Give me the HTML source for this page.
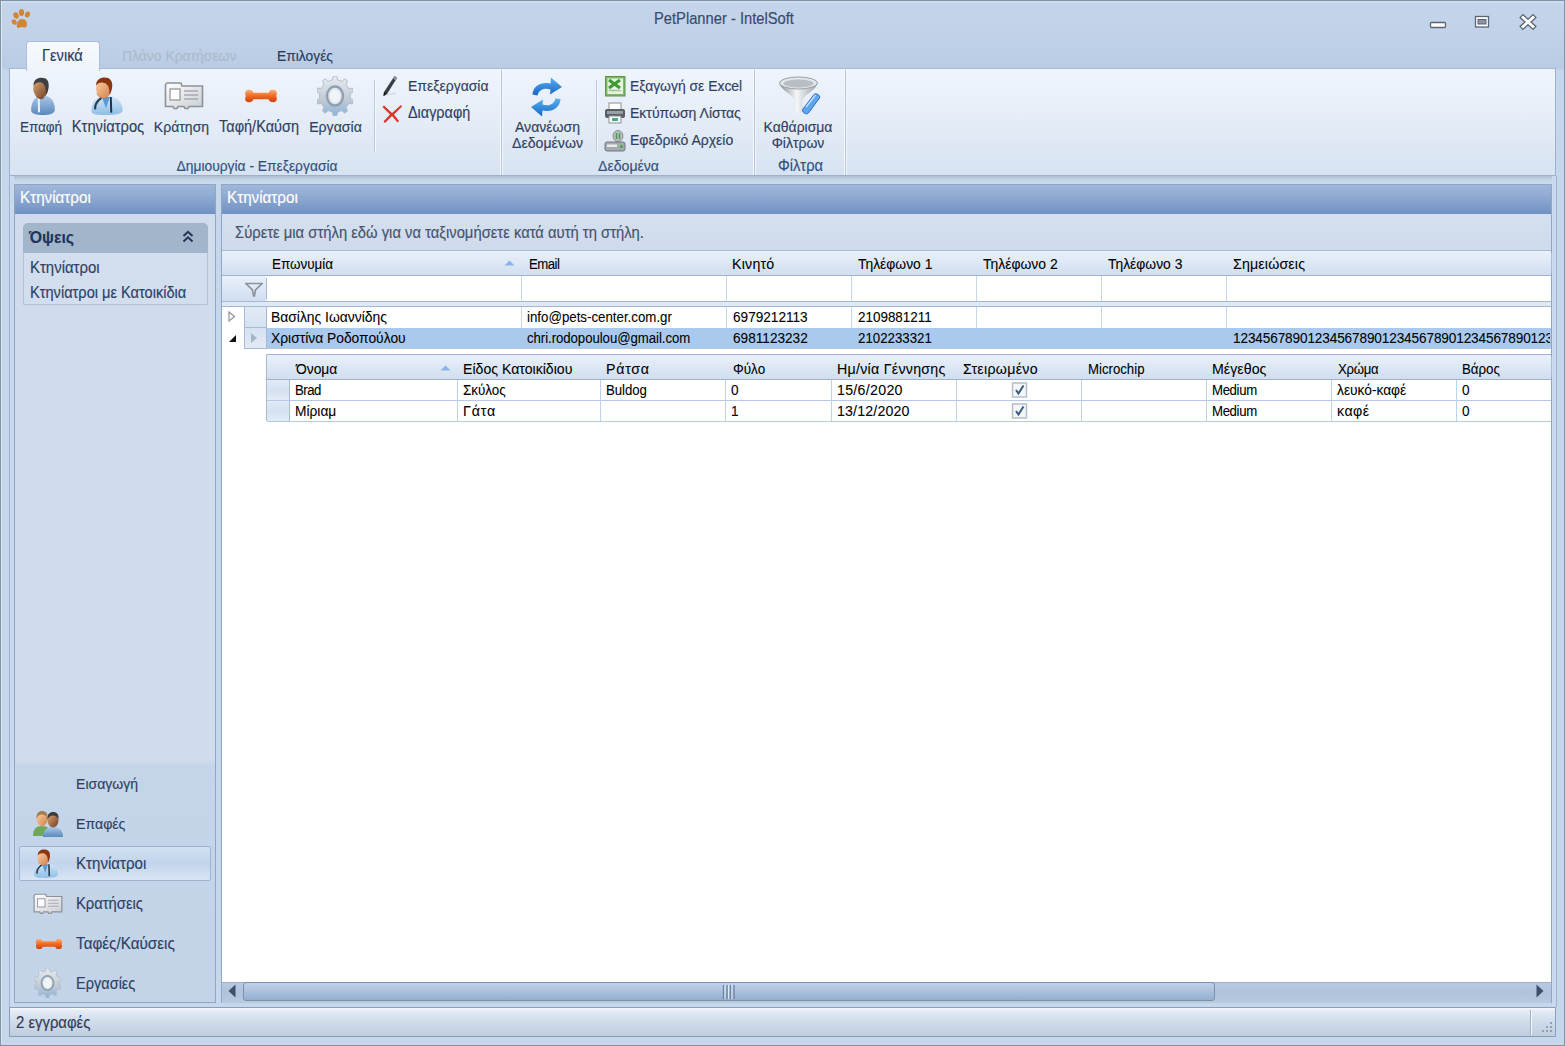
<!DOCTYPE html>
<html><head><meta charset="utf-8">
<style>
*{box-sizing:border-box;margin:0;padding:0}
html,body{width:1565px;height:1046px;overflow:hidden;background:#c4d5eb}
body{position:relative;font-family:"Liberation Sans",sans-serif;font-size:14px;color:#000}
.a{position:absolute}
.t{position:absolute;white-space:nowrap;line-height:16px;-webkit-text-stroke:0.15px currentColor;transform:scaleY(1.08)}
.k{-webkit-text-stroke:0.08px currentColor}
.rl{position:absolute;color:#2e4164;font-size:14px;line-height:16px;white-space:nowrap;-webkit-text-stroke:0.15px currentColor;transform:scaleY(1.08)}
</style></head><body>
<div id="root" style="position:absolute;left:0;top:0;width:1565px;height:1046px">
<svg width="0" height="0" style="position:absolute">
<defs>
<linearGradient id="gSkinD" x1="0" y1="0" x2="1" y2="1"><stop offset="0" stop-color="#e0a878"/><stop offset="1" stop-color="#6e4026"/></linearGradient>
<linearGradient id="gSkinL" x1="0" y1="0" x2="1" y2="1"><stop offset="0" stop-color="#ffd2a6"/><stop offset="1" stop-color="#d0804a"/></linearGradient>
<linearGradient id="gShirt" x1="0" y1="0" x2="0" y2="1"><stop offset="0" stop-color="#a9c8e8"/><stop offset="1" stop-color="#5d88bb"/></linearGradient>
<linearGradient id="gCoat" x1="0" y1="0" x2="0" y2="1"><stop offset="0" stop-color="#d2e8fa"/><stop offset="1" stop-color="#8fbde6"/></linearGradient>
<linearGradient id="gBone" x1="0" y1="0" x2="0" y2="1"><stop offset="0" stop-color="#ffb070"/><stop offset="0.5" stop-color="#f06a20"/><stop offset="1" stop-color="#d04010"/></linearGradient>
<linearGradient id="gGear" x1="0" y1="0" x2="0" y2="1"><stop offset="0" stop-color="#e8ecf0"/><stop offset="0.6" stop-color="#c0cad4"/><stop offset="1" stop-color="#8cb4dc"/></linearGradient>
<linearGradient id="gCard" x1="0" y1="0" x2="1" y2="1"><stop offset="0" stop-color="#ffffff"/><stop offset="1" stop-color="#c9cdd2"/></linearGradient>
<linearGradient id="gFunnel" x1="0" y1="0" x2="1" y2="0"><stop offset="0" stop-color="#8a8e94"/><stop offset="0.45" stop-color="#f4f6f8"/><stop offset="1" stop-color="#9ca2a8"/></linearGradient>
<linearGradient id="gBlue" x1="0" y1="0" x2="0" y2="1"><stop offset="0" stop-color="#58b0f4"/><stop offset="1" stop-color="#1666c4"/></linearGradient>
</defs></svg>
<div class="a" style="left:0px;top:0px;width:1565px;height:1046px;border:1px solid #8293a3;background:linear-gradient(#c4d5eb,#c1d2e9 30px,#bbcde5 62px,#b9cce6 67px,#c6d6eb 70px,#c6d6eb)"></div>
<div class="a" style="left:1px;top:1px;width:1563px;height:2px;background:#cddcf0"></div>
<div class="a" style="left:1px;top:1px;width:1px;height:1043px;background:#dae6f4"></div>
<span class="t" style="left:654px;top:11px;font-size:14.72px;color:#3a4a6a;">PetPlanner - IntelSoft</span>
<svg class="a" style="left:11px;top:8px" width="22" height="22" viewBox="0 0 22 22">
<g fill="#d38434"><ellipse cx="5" cy="7.5" rx="2.6" ry="3.2" transform="rotate(-25 5 7.5)"/><ellipse cx="10.5" cy="4.5" rx="2.6" ry="3.4"/><ellipse cx="16.5" cy="6.5" rx="2.5" ry="3.1" transform="rotate(25 16.5 6.5)"/><ellipse cx="3.2" cy="14" rx="2.3" ry="2.8" transform="rotate(-30 3.2 14)"/><path d="M6 19 C5 14 8 11 11 11 C14.5 11 17 14 15.5 18.5 C14.5 20.5 12 19 10.5 19 C9 19 6.5 21 6 19 Z"/></g>
</svg>
<svg class="a" style="left:1425px;top:12px" width="120" height="22" viewBox="0 0 120 22">
<rect x="5.5" y="10.5" width="15" height="5" rx="1" fill="#fff" stroke="#5b6577" stroke-width="1.3"/>
<rect x="50.5" y="4.5" width="13" height="10.5" fill="#fff" stroke="#5b6577" stroke-width="1.3"/>
<rect x="53" y="7.5" width="8" height="4.5" fill="#8b93a2" stroke="#5b6577" stroke-width="1"/>
<path d="M98 5.5 L108 14.5 M108 5.5 L98 14.5" stroke="#5b6577" stroke-width="5.4" stroke-linecap="square"/>
<path d="M98 5.5 L108 14.5 M108 5.5 L98 14.5" stroke="#fff" stroke-width="2.8" stroke-linecap="square"/>
</svg>
<div class="a" style="left:9px;top:68px;width:1547px;height:108px;border:1px solid #9fb1c8;border-top-color:#a9bacd;background:linear-gradient(#eff5fd,#e4ecf7 50%,#d7e3f2)"></div>
<div class="a" style="left:9px;top:176px;width:1547px;height:8px;background:linear-gradient(#aebfd3,#c6d6ea 50%,#cbdaee)"></div>
<svg class="a" style="left:29px;top:77px" width="28" height="38" viewBox="0 0 28 40">
<path d="M1.5 35 C1.5 25 6.5 19.5 14 19.5 C21.5 19.5 26.5 25 26.5 34.5 C26.5 39 20 40 14 40 C7.5 40 1.5 39 1.5 35 Z" fill="url(#gShirt)"/>
<path d="M8.5 21 L10.5 21 L10.8 37 L8.8 37 Z" fill="#f0f4f8"/>
<path d="M6 18 C7 23 12 25 15 22 L15 17 Z" fill="#7a5030"/>
<ellipse cx="11.5" cy="12" rx="7.8" ry="10.2" fill="url(#gSkinD)"/>
<path d="M4 9 C4 3 8 0.8 12.5 0.8 C18 0.8 20.5 4 20 10.5 C19.5 14 18.5 17 17 19 C17.5 13 16.5 8 13 6 C9.5 4.8 6 6 4 9 Z" fill="#3e3e40"/>
</svg>
<svg class="a" style="left:89px;top:77px" width="36" height="38" viewBox="0 0 36 40">
<path d="M1.5 36 C1.5 25 8 19.5 17 19.5 C26 19.5 34.5 25 34.5 35 C34.5 39 26 40 18 40 C9 40 1.5 39.5 1.5 36 Z" fill="url(#gCoat)"/>
<path d="M12.5 21 L17 33 L21 21 Z" fill="#5a9ad8"/>
<path d="M12 22 C8 25 5 29 5.5 34" stroke="#2a3a4a" stroke-width="2.2" fill="none"/>
<path d="M22 21 L22.5 37.5" stroke="#1e2e40" stroke-width="2" fill="none"/>
<path d="M7 17 C9 22 14 24 19 21 L19 16 Z" fill="#c07040"/>
<ellipse cx="14.5" cy="12" rx="8" ry="10.2" fill="url(#gSkinL)"/>
<path d="M6.5 9 C6.5 3 10.5 0.5 15.5 0.5 C21 0.5 24 4 23.5 10 C23 14 22 17 20.5 19 C21 13 20 8 16 6.5 C12 5.2 8.5 6 6.5 9 Z" fill="#8a3410"/>
</svg>
<svg class="a" style="left:164px;top:81px" width="40" height="30" viewBox="0 0 40 30">
<path d="M1.5 3.5 L1.5 25.5 L9 25.5 L10 27.5 L13 27.5 L14 25.5 L20 25.5 L21 27.5 L24 27.5 L25 25.5 L38.5 25.5 L38.5 5 L18 5 L17 2 L3 2 Z" fill="url(#gCard)" stroke="#8e9296" stroke-width="1.6"/>
<rect x="6" y="8" width="10" height="11" fill="#fff" stroke="#9aa0a6" stroke-width="1.4"/>
<path d="M20 10 H34 M20 14 H34 M20 18 H34" stroke="#a4aab0" stroke-width="1.3"/>
</svg>
<svg class="a" style="left:244px;top:89px" width="34" height="14" viewBox="0 0 34 14">
<path d="M5 0.8 C8 0.8 9 2.5 9.5 3.8 L24.5 3.8 C25 2.5 26 0.8 29 0.8 C32.5 0.8 33.8 3.8 32.2 7 C33.8 10.2 32.5 13.2 29 13.2 C26 13.2 25 11.5 24.5 10.2 L9.5 10.2 C9 11.5 8 13.2 5 13.2 C1.5 13.2 0.2 10.2 1.8 7 C0.2 3.8 1.5 0.8 5 0.8 Z" fill="url(#gBone)"/>
</svg>
<svg class="a" style="left:317px;top:76px" width="36" height="40" viewBox="0 0 36 40">
<g transform="translate(18,20)">
<path d="M-2.62 -16.04 L-1.71 -19.87 L1.71 -19.87 L2.62 -16.04 L6.86 -14.60 L9.74 -17.13 L12.50 -15.02 L11.10 -11.36 L13.72 -7.58 L17.47 -7.85 L18.52 -4.43 L15.34 -2.34 L15.34 2.34 L18.52 4.43 L17.47 7.85 L13.72 7.58 L11.10 11.36 L12.50 15.02 L9.74 17.13 L6.86 14.60 L2.62 16.04 L1.71 19.87 L-1.71 19.87 L-2.62 16.04 L-6.86 14.60 L-9.74 17.13 L-12.50 15.02 L-11.10 11.36 L-13.72 7.58 L-17.47 7.85 L-18.52 4.43 L-15.34 2.34 L-15.34 -2.34 L-18.52 -4.43 L-17.47 -7.85 L-13.72 -7.58 L-11.10 -11.36 L-12.50 -15.02 L-9.74 -17.13 L-6.86 -14.60 Z" fill="url(#gGear)" stroke="#a8b4c0" stroke-width="0.8"/>
<ellipse cx="0" cy="0" rx="8" ry="9.5" fill="#dfe5eb" stroke="#8fa0b2" stroke-width="2.4"/>
<ellipse cx="0" cy="0" rx="5" ry="6.5" fill="#f2f5f8"/>
</g></svg>
<span class="rl" style="left:-109px;width:300px;text-align:center;top:120px;font-size:13.51px;color:#2e4164;">Επαφή</span>
<span class="rl" style="left:-42px;width:300px;text-align:center;top:119px;font-size:14.73px;color:#2e4164;">Κτηνίατρος</span>
<span class="rl" style="left:31.5px;width:300px;text-align:center;top:119px;font-size:14.04px;color:#2e4164;">Κράτηση</span>
<span class="rl" style="left:109px;width:300px;text-align:center;top:119px;font-size:14.53px;color:#2e4164;">Ταφή/Καύση</span>
<span class="rl" style="left:185.5px;width:300px;text-align:center;top:119px;font-size:14.13px;color:#2e4164;">Εργασία</span>
<span class="rl" style="left:107px;width:300px;text-align:center;top:157.5px;font-size:13.84px;color:#35507e;">Δημιουργία - Επεξεργασία</span>
<div class="a" style="left:374px;top:80px;width:1px;height:72px;background:#b9c9dd;box-shadow:1px 0 0 #f6f9fd"></div>
<div class="a" style="left:596px;top:80px;width:1px;height:72px;background:#b9c9dd;box-shadow:1px 0 0 #f6f9fd"></div>
<div class="a" style="left:500px;top:70px;width:1px;height:105px;background:#f6f9fd"></div>
<div class="a" style="left:501px;top:70px;width:1px;height:105px;background:#b3c3d8"></div>
<div class="a" style="left:502px;top:70px;width:1px;height:105px;background:#f3f7fc"></div>
<div class="a" style="left:753px;top:70px;width:1px;height:105px;background:#f6f9fd"></div>
<div class="a" style="left:754px;top:70px;width:1px;height:105px;background:#b3c3d8"></div>
<div class="a" style="left:755px;top:70px;width:1px;height:105px;background:#f3f7fc"></div>
<div class="a" style="left:844px;top:70px;width:1px;height:105px;background:#f6f9fd"></div>
<div class="a" style="left:845px;top:70px;width:1px;height:105px;background:#b3c3d8"></div>
<div class="a" style="left:846px;top:70px;width:1px;height:105px;background:#f3f7fc"></div>
<svg class="a" style="left:382px;top:75px" width="16" height="22" viewBox="0 0 16 22">
<path d="M12.5 1 L15 3 L5 19 L1.5 21 L2 17 Z" fill="#3a3e44"/><path d="M12.5 1 L15 3 L13.5 5.5 L11 3.5 Z" fill="#8a9098"/><path d="M2 17 L5 19 L1.5 21 Z" fill="#111"/><path d="M4 20 L14 18" stroke="#c8ccd2" stroke-width="1.5" opacity="0.6"/>
</svg>
<svg class="a" style="left:382px;top:104px" width="21" height="20" viewBox="0 0 21 20">
<path d="M2 1.5 L10 9 L19 1 L20 2.5 L12 10.5 L17 17 L15.5 18.5 L10 12 L3 19 L1.5 17.5 L8 10.5 L0.5 3 Z" fill="#d8352a"/>
</svg>
<svg class="a" style="left:530px;top:77px" width="33" height="40" viewBox="0 0 33 40">
<path d="M2.5 17.5 C3 9 11 4.5 20.5 6.5 L21 0.5 L32 10 L20 17.5 L20.5 12.5 C14 10.5 9 12.5 7.5 18.5 Z" fill="url(#gBlue)"/>
<path d="M30.5 22 C30 31 22 35.5 12.5 33.5 L12 39.5 L1 30 L13 22.5 L12.5 27.5 C19 29.5 24 27.5 25.5 21.5 Z" fill="url(#gBlue)"/>
</svg>
<svg class="a" style="left:605px;top:76px" width="21" height="21" viewBox="0 0 21 21">
<rect x="0.5" y="0.5" width="19.5" height="19.5" fill="#7fb86a" stroke="#5a9648"/><rect x="2.5" y="2.5" width="15.5" height="15.5" fill="#e6f2df"/>
<path d="M4 4 L15 12 M15 4 L4 12" stroke="#3d9a36" stroke-width="3.2"/>
<path d="M4 14.5 H16" stroke="#9cc890" stroke-width="1.5"/>
</svg>
<svg class="a" style="left:604px;top:102px" width="22" height="22" viewBox="0 0 22 22">
<rect x="5" y="1" width="12" height="7" fill="#fff" stroke="#8a9096"/>
<rect x="1" y="7" width="20" height="9" rx="2" fill="#5a5f66"/>
<rect x="3" y="9" width="16" height="3" fill="#9aa0a6"/>
<rect x="5" y="14" width="12" height="7" fill="#fff" stroke="#8a9096"/>
<rect x="8" y="16" width="6" height="3" fill="#44aa88"/>
</svg>
<svg class="a" style="left:604px;top:130px" width="22" height="22" viewBox="0 0 22 22">
<ellipse cx="14" cy="6" rx="5" ry="5.5" fill="#b8bec4" stroke="#888e94"/>
<path d="M12.5 3 V9 M15.5 3 V9" stroke="#4a9a4a" stroke-width="1.5"/>
<rect x="1" y="12" width="20" height="9" rx="2" fill="#a4aab0" stroke="#70767c"/>
<rect x="3" y="14.5" width="10" height="2.5" fill="#e8eaec"/>
<circle cx="17.5" cy="16.5" r="1.6" fill="#38b038"/>
</svg>
<svg class="a" style="left:778px;top:76px" width="44" height="40" viewBox="0 0 44 40">
<path d="M1.5 7 C1.5 13 15 19 16.5 24 L16.5 35 C18 38.5 23 38.5 24.5 35 L24.5 24 C26 19 39.5 13 39.5 7 Z" fill="url(#gFunnel)"/>
<ellipse cx="20.5" cy="7" rx="19" ry="6" fill="#e2e6ea" stroke="#9aa0a6"/>
<ellipse cx="20.5" cy="7.5" rx="15" ry="4" fill="#b8bec4"/>
<path d="M25 33 L36 18.5 C37.5 16.5 43 19.5 41.5 22 L30.5 37 C28.5 39.5 23 36 25 33 Z" fill="#5ea6f0" stroke="#2a6cc4"/>
<path d="M28 31 L37.5 19" stroke="#c4e0fb" stroke-width="1.5"/>
</svg>
<span class="rl" style="left:408px;top:78px;font-size:13.99px;color:#2e4164;">Επεξεργασία</span>
<span class="rl" style="left:408px;top:105px;font-size:14.42px;color:#2e4164;">Διαγραφή</span>
<span class="rl" style="left:397.5px;width:300px;text-align:center;top:119px;font-size:14.05px;color:#2e4164;">Ανανέωση</span>
<span class="rl" style="left:397.5px;width:300px;text-align:center;top:135px;font-size:14.1px;color:#2e4164;">Δεδομένων</span>
<span class="rl" style="left:630px;top:78px;font-size:13.92px;color:#2e4164;">Εξαγωγή σε Excel</span>
<span class="rl" style="left:630px;top:105px;font-size:14.03px;color:#2e4164;">Εκτύπωση Λίστας</span>
<span class="rl" style="left:630px;top:132px;font-size:14.04px;color:#2e4164;">Εφεδρικό Αρχείο</span>
<span class="rl" style="left:478.5px;width:300px;text-align:center;top:157.5px;font-size:14.07px;color:#35507e;">Δεδομένα</span>
<span class="rl" style="left:648px;width:300px;text-align:center;top:119px;font-size:13.98px;color:#2e4164;">Καθάρισμα</span>
<span class="rl" style="left:648px;width:300px;text-align:center;top:135px;font-size:14.0px;color:#2e4164;">Φίλτρων</span>
<span class="rl" style="left:650.5px;width:300px;text-align:center;top:157.5px;font-size:14.71px;color:#35507e;">Φίλτρα</span>
<div class="a" style="left:26px;top:41px;width:74px;height:30px;border:1px solid #a9bedb;border-bottom:none;border-radius:3px 3px 0 0;background:linear-gradient(#f7fafe,#eef4fb)"></div>
<span class="t" style="left:42px;top:48px;font-size:14.65px;color:#2a3b5a;">Γενικά</span>
<span class="t" style="left:122px;top:48px;font-size:13.92px;color:#adbacb;">Πλάνο Κρατήσεων</span>
<span class="t" style="left:277px;top:48px;font-size:13.84px;color:#2a3b5a;">Επιλογές</span>
<div class="a" style="left:14px;top:184px;width:202px;height:819px;border:1px solid #93a6c0;background:#d0dced"></div>
<div class="a" style="left:15px;top:185px;width:200px;height:29px;background:linear-gradient(#a0b7d9,#8aa6d0 50%,#7091c2)"></div>
<span class="t" style="left:20px;top:190px;font-size:15.2px;color:#fff;">Κτηνίατροι</span>
<div class="a" style="left:221px;top:184px;width:1331px;height:819px;border:1px solid #8fa6c6;background:#fff"></div>
<div class="a" style="left:222px;top:185px;width:1329px;height:29px;background:linear-gradient(#a0b7d9,#8aa6d0 50%,#7091c2)"></div>
<span class="t" style="left:227px;top:190px;font-size:15.2px;color:#fff;">Κτηνίατροι</span>
<div class="a" style="left:222px;top:214px;width:1329px;height:36px;background:linear-gradient(#d4e0ef,#cfdbec)"></div>
<div class="a" style="left:222px;top:250px;width:1329px;height:1px;background:#a7bad3"></div>
<span class="t" style="left:235px;top:224.5px;font-size:14.8px;color:#46536a;">Σύρετε μια στήλη εδώ για να ταξινομήσετε κατά αυτή τη στήλη.</span>
<div class="a" style="left:222px;top:251px;width:44px;height:24px;background:linear-gradient(#e9f0fa,#dce7f5 55%,#d1def0)"></div>
<div class="a" style="left:266px;top:253px;width:1px;height:20px;background:#aabcd4"></div>
<div class="a" style="left:267px;top:253px;width:1px;height:20px;background:#f2f6fc"></div>
<div class="a" style="left:266px;top:251px;width:255px;height:24px;background:linear-gradient(#e9f0fa,#dce7f5 55%,#d1def0)"></div>
<div class="a" style="left:521px;top:253px;width:1px;height:20px;background:#aabcd4"></div>
<div class="a" style="left:522px;top:253px;width:1px;height:20px;background:#f2f6fc"></div>
<span class="t k" style="left:272px;top:257px;font-size:13.45px;color:#000;">Επωνυμία</span>
<div class="a" style="left:521px;top:251px;width:205px;height:24px;background:linear-gradient(#e9f0fa,#dce7f5 55%,#d1def0)"></div>
<div class="a" style="left:726px;top:253px;width:1px;height:20px;background:#aabcd4"></div>
<div class="a" style="left:727px;top:253px;width:1px;height:20px;background:#f2f6fc"></div>
<span class="t k" style="left:529px;top:257px;font-size:13.2px;color:#000;letter-spacing:-0.532px;">Email</span>
<div class="a" style="left:726px;top:251px;width:125px;height:24px;background:linear-gradient(#e9f0fa,#dce7f5 55%,#d1def0)"></div>
<div class="a" style="left:851px;top:253px;width:1px;height:20px;background:#aabcd4"></div>
<div class="a" style="left:852px;top:253px;width:1px;height:20px;background:#f2f6fc"></div>
<span class="t k" style="left:732px;top:256px;font-size:14.2px;color:#000;letter-spacing:0.224px;">Κινητό</span>
<div class="a" style="left:851px;top:251px;width:125px;height:24px;background:linear-gradient(#e9f0fa,#dce7f5 55%,#d1def0)"></div>
<div class="a" style="left:976px;top:253px;width:1px;height:20px;background:#aabcd4"></div>
<div class="a" style="left:977px;top:253px;width:1px;height:20px;background:#f2f6fc"></div>
<span class="t k" style="left:858px;top:256px;font-size:13.89px;color:#000;">Τηλέφωνο 1</span>
<div class="a" style="left:976px;top:251px;width:125px;height:24px;background:linear-gradient(#e9f0fa,#dce7f5 55%,#d1def0)"></div>
<div class="a" style="left:1101px;top:253px;width:1px;height:20px;background:#aabcd4"></div>
<div class="a" style="left:1102px;top:253px;width:1px;height:20px;background:#f2f6fc"></div>
<span class="t k" style="left:983px;top:256px;font-size:13.94px;color:#000;">Τηλέφωνο 2</span>
<div class="a" style="left:1101px;top:251px;width:125px;height:24px;background:linear-gradient(#e9f0fa,#dce7f5 55%,#d1def0)"></div>
<div class="a" style="left:1226px;top:253px;width:1px;height:20px;background:#aabcd4"></div>
<div class="a" style="left:1227px;top:253px;width:1px;height:20px;background:#f2f6fc"></div>
<span class="t k" style="left:1108px;top:256px;font-size:13.88px;color:#000;">Τηλέφωνο 3</span>
<div class="a" style="left:1226px;top:251px;width:325px;height:24px;background:linear-gradient(#e9f0fa,#dce7f5 55%,#d1def0)"></div>
<div class="a" style="left:1551px;top:253px;width:1px;height:20px;background:#aabcd4"></div>
<div class="a" style="left:1552px;top:253px;width:1px;height:20px;background:#f2f6fc"></div>
<span class="t k" style="left:1233px;top:256px;font-size:14.2px;color:#000;letter-spacing:0.167px;">Σημειώσεις</span>
<div class="a" style="left:222px;top:275px;width:1329px;height:1px;background:#9fb3cd"></div>
<svg class="a" style="left:504px;top:260px" width="11" height="6" viewBox="0 0 11 6"><path d="M0.5 5.5 L5.5 0.5 L10.5 5.5 Z" fill="#8ab4e8"/></svg>
<div class="a" style="left:222px;top:276px;width:44px;height:25px;background:linear-gradient(#e9f0fa,#dce7f5 55%,#d1def0)"></div>
<div class="a" style="left:266px;top:278px;width:1px;height:21px;background:#aabcd4"></div>
<div class="a" style="left:267px;top:278px;width:1px;height:21px;background:#f2f6fc"></div>
<div class="a" style="left:267px;top:276px;width:1284px;height:25px;background:#fff"></div>
<div class="a" style="left:521px;top:276px;width:1px;height:25px;background:#c9d7ea"></div>
<div class="a" style="left:726px;top:276px;width:1px;height:25px;background:#c9d7ea"></div>
<div class="a" style="left:851px;top:276px;width:1px;height:25px;background:#c9d7ea"></div>
<div class="a" style="left:976px;top:276px;width:1px;height:25px;background:#c9d7ea"></div>
<div class="a" style="left:1101px;top:276px;width:1px;height:25px;background:#c9d7ea"></div>
<div class="a" style="left:1226px;top:276px;width:1px;height:25px;background:#c9d7ea"></div>
<svg class="a" style="left:245px;top:282px" width="18" height="15" viewBox="0 0 18 15"><path d="M1 1.5 H17 L10.5 8 L9.5 14 L8.5 14 L7.5 8 Z" fill="none" stroke="#8a939c" stroke-width="1.6"/></svg>
<div class="a" style="left:222px;top:301px;width:1329px;height:1px;background:#a4b7d0"></div>
<div class="a" style="left:222px;top:302px;width:1329px;height:4px;background:#dfe8f5"></div>
<div class="a" style="left:222px;top:306px;width:1329px;height:1px;background:#a4b7d0"></div>
<div class="a" style="left:222px;top:307px;width:1329px;height:42px;background:#fff"></div>
<div class="a" style="left:267px;top:328px;width:1284px;height:21px;background:#a9caee"></div>
<div class="a" style="left:244px;top:307px;width:22px;height:42px;background:linear-gradient(#e2eaf6,#d5e1f1 50%,#e3ebf7)"></div>
<div class="a" style="left:244px;top:307px;width:1px;height:42px;background:#a7bad3"></div>
<div class="a" style="left:266px;top:307px;width:1px;height:42px;background:#a7bad3"></div>
<div class="a" style="left:244px;top:327px;width:22px;height:1px;background:#a7bad3"></div>
<div class="a" style="left:244px;top:348px;width:22px;height:1px;background:#a7bad3"></div>
<div class="a" style="left:267px;top:348px;width:1284px;height:1px;background:#b9c9dc"></div>
<div class="a" style="left:521px;top:307px;width:1px;height:21px;background:#c9d7ea"></div>
<div class="a" style="left:726px;top:307px;width:1px;height:21px;background:#c9d7ea"></div>
<div class="a" style="left:851px;top:307px;width:1px;height:21px;background:#c9d7ea"></div>
<div class="a" style="left:976px;top:307px;width:1px;height:21px;background:#c9d7ea"></div>
<div class="a" style="left:1101px;top:307px;width:1px;height:21px;background:#c9d7ea"></div>
<div class="a" style="left:1226px;top:307px;width:1px;height:21px;background:#c9d7ea"></div>
<svg class="a" style="left:228px;top:311px" width="8" height="11" viewBox="0 0 8 11"><path d="M1 1 L6.5 5.5 L1 10 Z" fill="#fff" stroke="#8e949a" stroke-width="1.2"/></svg>
<svg class="a" style="left:228px;top:334px" width="9" height="9" viewBox="0 0 9 9"><path d="M8 1 L8 8 L1 8 Z" fill="#111"/></svg>
<svg class="a" style="left:250px;top:332px" width="8" height="12" viewBox="0 0 8 12"><path d="M1 1 L7 6 L1 11 Z" fill="#a6b6c8"/></svg>
<span class="t k" style="left:271px;top:309px;font-size:13.89px;color:#000;">Βασίλης Ιωαννίδης</span>
<span class="t k" style="left:527px;top:310px;font-size:13.29px;color:#000;">info@pets-center.com.gr</span>
<span class="t k" style="left:733px;top:310px;font-size:13.61px;color:#000;">6979212113</span>
<span class="t k" style="left:858px;top:310px;font-size:13.45px;color:#000;">2109881211</span>
<span class="t k" style="left:271px;top:330px;font-size:13.84px;color:#000;">Χριστίνα Ροδοπούλου</span>
<span class="t k" style="left:527px;top:331px;font-size:13.2px;color:#000;letter-spacing:-0.049px;">chri.rodopoulou@gmail.com</span>
<span class="t k" style="left:733px;top:331px;font-size:13.63px;color:#000;">6981123232</span>
<span class="t k" style="left:858px;top:331px;font-size:13.27px;color:#000;">2102233321</span>
<div class="a" style="left:1233px;top:331px;width:317px;height:17px;overflow:hidden"><span class="t k" style="left:0;top:0;font-size:13.6px;color:#000;letter-spacing:-0.12px">12345678901234567890123456789012345678901234567890</span></div>
<div class="a" style="left:266px;top:354px;width:1285px;height:1px;background:#9fb3cd"></div>
<div class="a" style="left:266px;top:355px;width:23px;height:24px;background:linear-gradient(#e9f0fa,#dce7f5 55%,#d1def0)"></div>
<div class="a" style="left:289px;top:357px;width:1px;height:20px;background:#aabcd4"></div>
<div class="a" style="left:290px;top:357px;width:1px;height:20px;background:#f2f6fc"></div>
<div class="a" style="left:289px;top:355px;width:168px;height:24px;background:linear-gradient(#e9f0fa,#dce7f5 55%,#d1def0)"></div>
<div class="a" style="left:457px;top:357px;width:1px;height:20px;background:#aabcd4"></div>
<div class="a" style="left:458px;top:357px;width:1px;height:20px;background:#f2f6fc"></div>
<span class="t k" style="left:296px;top:361px;font-size:13.85px;color:#000;">Όνομα</span>
<div class="a" style="left:457px;top:355px;width:143px;height:24px;background:linear-gradient(#e9f0fa,#dce7f5 55%,#d1def0)"></div>
<div class="a" style="left:600px;top:357px;width:1px;height:20px;background:#aabcd4"></div>
<div class="a" style="left:601px;top:357px;width:1px;height:20px;background:#f2f6fc"></div>
<span class="t k" style="left:463px;top:361px;font-size:14.1px;color:#000;">Είδος Κατοικίδιου</span>
<div class="a" style="left:600px;top:355px;width:125px;height:24px;background:linear-gradient(#e9f0fa,#dce7f5 55%,#d1def0)"></div>
<div class="a" style="left:725px;top:357px;width:1px;height:20px;background:#aabcd4"></div>
<div class="a" style="left:726px;top:357px;width:1px;height:20px;background:#f2f6fc"></div>
<span class="t k" style="left:606px;top:361px;font-size:14.2px;color:#000;letter-spacing:0.743px;">Ράτσα</span>
<div class="a" style="left:725px;top:355px;width:106px;height:24px;background:linear-gradient(#e9f0fa,#dce7f5 55%,#d1def0)"></div>
<div class="a" style="left:831px;top:357px;width:1px;height:20px;background:#aabcd4"></div>
<div class="a" style="left:832px;top:357px;width:1px;height:20px;background:#f2f6fc"></div>
<span class="t k" style="left:733px;top:362px;font-size:13.48px;color:#000;">Φύλο</span>
<div class="a" style="left:831px;top:355px;width:125px;height:24px;background:linear-gradient(#e9f0fa,#dce7f5 55%,#d1def0)"></div>
<div class="a" style="left:956px;top:357px;width:1px;height:20px;background:#aabcd4"></div>
<div class="a" style="left:957px;top:357px;width:1px;height:20px;background:#f2f6fc"></div>
<span class="t k" style="left:837px;top:361px;font-size:14.2px;color:#000;letter-spacing:0.279px;">Ημ/νία Γέννησης</span>
<div class="a" style="left:956px;top:355px;width:125px;height:24px;background:linear-gradient(#e9f0fa,#dce7f5 55%,#d1def0)"></div>
<div class="a" style="left:1081px;top:357px;width:1px;height:20px;background:#aabcd4"></div>
<div class="a" style="left:1082px;top:357px;width:1px;height:20px;background:#f2f6fc"></div>
<span class="t k" style="left:963px;top:361px;font-size:14.2px;color:#000;letter-spacing:0.306px;">Στειρωμένο</span>
<div class="a" style="left:1081px;top:355px;width:125px;height:24px;background:linear-gradient(#e9f0fa,#dce7f5 55%,#d1def0)"></div>
<div class="a" style="left:1206px;top:357px;width:1px;height:20px;background:#aabcd4"></div>
<div class="a" style="left:1207px;top:357px;width:1px;height:20px;background:#f2f6fc"></div>
<span class="t k" style="left:1088px;top:362px;font-size:13.21px;color:#000;">Microchip</span>
<div class="a" style="left:1206px;top:355px;width:125px;height:24px;background:linear-gradient(#e9f0fa,#dce7f5 55%,#d1def0)"></div>
<div class="a" style="left:1331px;top:357px;width:1px;height:20px;background:#aabcd4"></div>
<div class="a" style="left:1332px;top:357px;width:1px;height:20px;background:#f2f6fc"></div>
<span class="t k" style="left:1212px;top:361px;font-size:14.2px;color:#000;letter-spacing:0.037px;">Μέγεθος</span>
<div class="a" style="left:1331px;top:355px;width:125px;height:24px;background:linear-gradient(#e9f0fa,#dce7f5 55%,#d1def0)"></div>
<div class="a" style="left:1456px;top:357px;width:1px;height:20px;background:#aabcd4"></div>
<div class="a" style="left:1457px;top:357px;width:1px;height:20px;background:#f2f6fc"></div>
<span class="t k" style="left:1338px;top:362px;font-size:13.2px;color:#000;letter-spacing:-0.305px;">Χρώμα</span>
<div class="a" style="left:1456px;top:355px;width:95px;height:24px;background:linear-gradient(#e9f0fa,#dce7f5 55%,#d1def0)"></div>
<div class="a" style="left:1551px;top:357px;width:1px;height:20px;background:#aabcd4"></div>
<div class="a" style="left:1552px;top:357px;width:1px;height:20px;background:#f2f6fc"></div>
<span class="t k" style="left:1462px;top:362px;font-size:13.31px;color:#000;">Βάρος</span>
<div class="a" style="left:266px;top:354px;width:1px;height:67px;background:#a7bad3"></div>
<div class="a" style="left:266px;top:379px;width:1285px;height:1px;background:#9fb3cd"></div>
<svg class="a" style="left:440px;top:365px" width="11" height="6" viewBox="0 0 11 6"><path d="M0.5 5.5 L5.5 0.5 L10.5 5.5 Z" fill="#8ab4e8"/></svg>
<div class="a" style="left:267px;top:380px;width:23px;height:20px;background:linear-gradient(#e2eaf6,#d5e1f1 50%,#e3ebf7)"></div>
<div class="a" style="left:289px;top:380px;width:1px;height:20px;background:#a7bad3"></div>
<div class="a" style="left:267px;top:400px;width:1284px;height:1px;background:#b5c8e6"></div>
<div class="a" style="left:267px;top:401px;width:23px;height:20px;background:linear-gradient(#e2eaf6,#d5e1f1 50%,#e3ebf7)"></div>
<div class="a" style="left:289px;top:401px;width:1px;height:20px;background:#a7bad3"></div>
<div class="a" style="left:267px;top:421px;width:1284px;height:1px;background:#b5c8e6"></div>
<div class="a" style="left:457px;top:380px;width:1px;height:41px;background:#c1d1ea"></div>
<div class="a" style="left:600px;top:380px;width:1px;height:41px;background:#c1d1ea"></div>
<div class="a" style="left:725px;top:380px;width:1px;height:41px;background:#c1d1ea"></div>
<div class="a" style="left:831px;top:380px;width:1px;height:41px;background:#c1d1ea"></div>
<div class="a" style="left:956px;top:380px;width:1px;height:41px;background:#c1d1ea"></div>
<div class="a" style="left:1081px;top:380px;width:1px;height:41px;background:#c1d1ea"></div>
<div class="a" style="left:1206px;top:380px;width:1px;height:41px;background:#c1d1ea"></div>
<div class="a" style="left:1331px;top:380px;width:1px;height:41px;background:#c1d1ea"></div>
<div class="a" style="left:1456px;top:380px;width:1px;height:41px;background:#c1d1ea"></div>
<span class="t k" style="left:295px;top:383px;font-size:13.2px;color:#000;letter-spacing:-0.528px;">Brad</span>
<span class="t k" style="left:463px;top:383px;font-size:13.41px;color:#000;">Σκύλος</span>
<span class="t k" style="left:606px;top:383px;font-size:13.2px;color:#000;letter-spacing:-0.061px;">Buldog</span>
<span class="t k" style="left:731px;top:383px;font-size:13.6px;color:#000;">0</span>
<span class="t k" style="left:837px;top:382px;font-size:14.2px;color:#000;letter-spacing:0.292px;">15/6/2020</span>
<span class="t k" style="left:1212px;top:383px;font-size:13.2px;color:#000;letter-spacing:-0.352px;">Medium</span>
<span class="t k" style="left:1337px;top:383px;font-size:13.76px;color:#000;">λευκό-καφέ</span>
<span class="t k" style="left:1462px;top:383px;font-size:13.6px;color:#000;">0</span>
<svg class="a" style="left:1011px;top:382px" width="17" height="16" viewBox="0 0 17 16"><rect x="1.5" y="1" width="14" height="14" fill="#f4f6f9" stroke="#b6bec8" stroke-width="1.5"/><path d="M5 8 L7.5 11.5 L12.5 3.5" stroke="#3a5a80" stroke-width="2" fill="none"/></svg>
<span class="t k" style="left:295px;top:404px;font-size:13.77px;color:#000;">Μίριαμ</span>
<span class="t k" style="left:463px;top:403px;font-size:14.2px;color:#000;letter-spacing:0.829px;">Γάτα</span>
<span class="t k" style="left:731px;top:404px;font-size:13.6px;color:#000;">1</span>
<span class="t k" style="left:837px;top:403px;font-size:14.2px;color:#000;letter-spacing:0.16px;">13/12/2020</span>
<span class="t k" style="left:1212px;top:404px;font-size:13.2px;color:#000;letter-spacing:-0.352px;">Medium</span>
<span class="t k" style="left:1337px;top:403px;font-size:14.2px;color:#000;letter-spacing:0.467px;">καφέ</span>
<span class="t k" style="left:1462px;top:404px;font-size:13.6px;color:#000;">0</span>
<svg class="a" style="left:1011px;top:403px" width="17" height="16" viewBox="0 0 17 16"><rect x="1.5" y="1" width="14" height="14" fill="#f4f6f9" stroke="#b6bec8" stroke-width="1.5"/><path d="M5 8 L7.5 11.5 L12.5 3.5" stroke="#3a5a80" stroke-width="2" fill="none"/></svg>
<div class="a" style="left:222px;top:982px;width:1329px;height:21px;background:linear-gradient(#b8cae1,#b0c3dc 50%,#b8cae0);border-top:1px solid #9fb2cb"></div>
<svg class="a" style="left:227px;top:984px" width="10" height="14" viewBox="0 0 10 14"><path d="M8.5 0.5 L1.5 7 L8.5 13.5 Z" fill="#3e4f6b"/></svg>
<svg class="a" style="left:1535px;top:984px" width="10" height="14" viewBox="0 0 10 14"><path d="M1.5 0.5 L8.5 7 L1.5 13.5 Z" fill="#3e4f6b"/></svg>
<div class="a" style="left:243px;top:982px;width:972px;height:19px;border:1px solid #7a90ac;border-radius:3px;background:linear-gradient(#bed1ea,#aac1dd 50%,#94afce)"></div>
<svg class="a" style="left:721px;top:984px" width="16" height="16" viewBox="0 0 16 16"><path d="M2.5 1 V15 M6 1 V15 M9.5 1 V15 M13 1 V15" stroke="#6c82a4" stroke-width="1.3"/><path d="M4 1 V15 M7.5 1 V15 M11 1 V15" stroke="#dfe8f4" stroke-width="1"/></svg>
<div class="a" style="left:23px;top:223px;width:185px;height:82px;border:1px solid #b3c2d6;border-radius:5px 5px 0 0;background:#d2deee"></div>
<div class="a" style="left:23px;top:223px;width:185px;height:30px;border-radius:5px 5px 0 0;background:#a3b5cb"></div>
<span class="t" style="left:29px;top:230px;font-size:15.8px;color:#1f3559;font-weight:bold">Όψεις</span>
<svg class="a" style="left:182px;top:230px" width="12" height="13" viewBox="0 0 12 13"><path d="M1.5 6 L6 1.8 L10.5 6 M1.5 11.5 L6 7.3 L10.5 11.5" stroke="#1f3559" stroke-width="2" fill="none"/></svg>
<span class="t" style="left:30px;top:260px;font-size:14.95px;color:#2e4164;">Κτηνίατροι</span>
<span class="t" style="left:30px;top:285px;font-size:14.6px;color:#2e4164;">Κτηνίατροι με Κατοικίδια</span>
<div class="a" style="left:15px;top:760px;width:200px;height:242px;background:linear-gradient(#d0dced,#c5d5e9 6px,#c4d4e8)"></div>
<div class="a" style="left:19px;top:846px;width:192px;height:35px;border:1px solid #9fb3cc;border-radius:2px;background:linear-gradient(#d2e0f2,#c2d4ec 50%,#d8e5f5)"></div>
<span class="t" style="left:76px;top:776px;font-size:14.07px;color:#2e4164;">Εισαγωγή</span>
<span class="t" style="left:76px;top:816px;font-size:14.14px;color:#2e4164;">Επαφές</span>
<span class="t" style="left:76px;top:856px;font-size:15.1px;color:#2e4164;">Κτηνίατροι</span>
<span class="t" style="left:76px;top:896px;font-size:14.78px;color:#2e4164;">Κρατήσεις</span>
<span class="t" style="left:76px;top:936px;font-size:15.24px;color:#2e4164;">Ταφές/Καύσεις</span>
<span class="t" style="left:76px;top:976px;font-size:14.55px;color:#2e4164;">Εργασίες</span>
<svg class="a" style="left:33px;top:848px" width="26" height="31" viewBox="0 0 36 40">
<path d="M1.5 36 C1.5 25 8 19.5 17 19.5 C26 19.5 34.5 25 34.5 35 C34.5 39 26 40 18 40 C9 40 1.5 39.5 1.5 36 Z" fill="url(#gCoat)"/>
<path d="M12.5 21 L17 33 L21 21 Z" fill="#5a9ad8"/>
<path d="M12 22 C8 25 5 29 5.5 34" stroke="#2a3a4a" stroke-width="2.2" fill="none"/>
<path d="M22 21 L22.5 37.5" stroke="#1e2e40" stroke-width="2" fill="none"/>
<path d="M7 17 C9 22 14 24 19 21 L19 16 Z" fill="#c07040"/>
<ellipse cx="14.5" cy="12" rx="8" ry="10.2" fill="url(#gSkinL)"/>
<path d="M6.5 9 C6.5 3 10.5 0.5 15.5 0.5 C21 0.5 24 4 23.5 10 C23 14 22 17 20.5 19 C21 13 20 8 16 6.5 C12 5.2 8.5 6 6.5 9 Z" fill="#8a3410"/>
</svg>
<svg class="a" style="left:33px;top:892px" width="30" height="24" viewBox="0 0 40 30">
<path d="M1.5 3.5 L1.5 25.5 L9 25.5 L10 27.5 L13 27.5 L14 25.5 L20 25.5 L21 27.5 L24 27.5 L25 25.5 L38.5 25.5 L38.5 5 L18 5 L17 2 L3 2 Z" fill="url(#gCard)" stroke="#8e9296" stroke-width="1.6"/>
<rect x="6" y="8" width="10" height="11" fill="#fff" stroke="#9aa0a6" stroke-width="1.4"/>
<path d="M20 10 H34 M20 14 H34 M20 18 H34" stroke="#a4aab0" stroke-width="1.3"/>
</svg>
<svg class="a" style="left:35px;top:938px" width="28" height="12" viewBox="0 0 34 14">
<path d="M5 0.8 C8 0.8 9 2.5 9.5 3.8 L24.5 3.8 C25 2.5 26 0.8 29 0.8 C32.5 0.8 33.8 3.8 32.2 7 C33.8 10.2 32.5 13.2 29 13.2 C26 13.2 25 11.5 24.5 10.2 L9.5 10.2 C9 11.5 8 13.2 5 13.2 C1.5 13.2 0.2 10.2 1.8 7 C0.2 3.8 1.5 0.8 5 0.8 Z" fill="url(#gBone)"/>
</svg>
<svg class="a" style="left:34px;top:968px" width="27" height="30" viewBox="0 0 36 40">
<g transform="translate(18,20)">
<path d="M-2.62 -16.04 L-1.71 -19.87 L1.71 -19.87 L2.62 -16.04 L6.86 -14.60 L9.74 -17.13 L12.50 -15.02 L11.10 -11.36 L13.72 -7.58 L17.47 -7.85 L18.52 -4.43 L15.34 -2.34 L15.34 2.34 L18.52 4.43 L17.47 7.85 L13.72 7.58 L11.10 11.36 L12.50 15.02 L9.74 17.13 L6.86 14.60 L2.62 16.04 L1.71 19.87 L-1.71 19.87 L-2.62 16.04 L-6.86 14.60 L-9.74 17.13 L-12.50 15.02 L-11.10 11.36 L-13.72 7.58 L-17.47 7.85 L-18.52 4.43 L-15.34 2.34 L-15.34 -2.34 L-18.52 -4.43 L-17.47 -7.85 L-13.72 -7.58 L-11.10 -11.36 L-12.50 -15.02 L-9.74 -17.13 L-6.86 -14.60 Z" fill="url(#gGear)" stroke="#a8b4c0" stroke-width="0.8"/>
<ellipse cx="0" cy="0" rx="8" ry="9.5" fill="#dfe5eb" stroke="#8fa0b2" stroke-width="2.4"/>
<ellipse cx="0" cy="0" rx="5" ry="6.5" fill="#f2f5f8"/>
</g></svg>
<svg class="a" style="left:32px;top:810px" width="32" height="28" viewBox="0 0 32 28">
<path d="M1 26 C1 19 4 16 10 16 C16 16 19 19 19 26 Z" fill="#6fa85a"/>
<ellipse cx="10" cy="9" rx="5.5" ry="7" fill="url(#gSkinL)"/>
<path d="M4.5 9 C4 3 7 1 10 1 C14 1 16 3.5 15.5 8 C14 5 12 4.5 10 4.5 C7 4.5 5.5 6 4.5 9 Z" fill="#a08050"/>
<path d="M11 27 C11 20 15 17 21 17 C27 17 31 20 31 27 Z" fill="url(#gShirt)"/>
<ellipse cx="21" cy="10" rx="5.5" ry="7.5" fill="url(#gSkinD)"/>
<path d="M15.5 10 C15 4 18 2 21 2 C25 2 27 4.5 26.5 9 C25 6 23 5.5 21 5.5 C18 5.5 16.5 7 15.5 10 Z" fill="#3c3c3c"/>
</svg>
<div class="a" style="left:9px;top:176px;width:1px;height:831px;background:#9fb2cb"></div>
<div class="a" style="left:1556px;top:176px;width:1px;height:831px;background:#9fb2cb"></div>
<div class="a" style="left:10px;top:176px;width:4px;height:831px;background:#cad9ed"></div>
<div class="a" style="left:1552px;top:176px;width:4px;height:831px;background:#cad9ed"></div>
<div class="a" style="left:9px;top:1007px;width:1547px;height:30px;border:1px solid #8b9fb9;background:linear-gradient(#f6f9fd,#e3ebf5 3px,#d2ddeb 45%,#bfcde0)"></div>
<span class="t" style="left:16px;top:1015px;font-size:14.89px;color:#2d3c57;">2 εγγραφές</span>
<div class="a" style="left:1530px;top:1010px;width:1px;height:25px;background:#9fb0c6"></div>
<div class="a" style="left:1531px;top:1010px;width:1px;height:25px;background:#f4f8fc"></div>
<svg class="a" style="left:1540px;top:1020px" width="14" height="14" viewBox="0 0 14 14"><g fill="#8ea0b8"><rect x="10" y="2" width="2" height="2"/><rect x="6" y="6" width="2" height="2"/><rect x="10" y="6" width="2" height="2"/><rect x="2" y="10" width="2" height="2"/><rect x="6" y="10" width="2" height="2"/><rect x="10" y="10" width="2" height="2"/></g></svg>
</div></body></html>
